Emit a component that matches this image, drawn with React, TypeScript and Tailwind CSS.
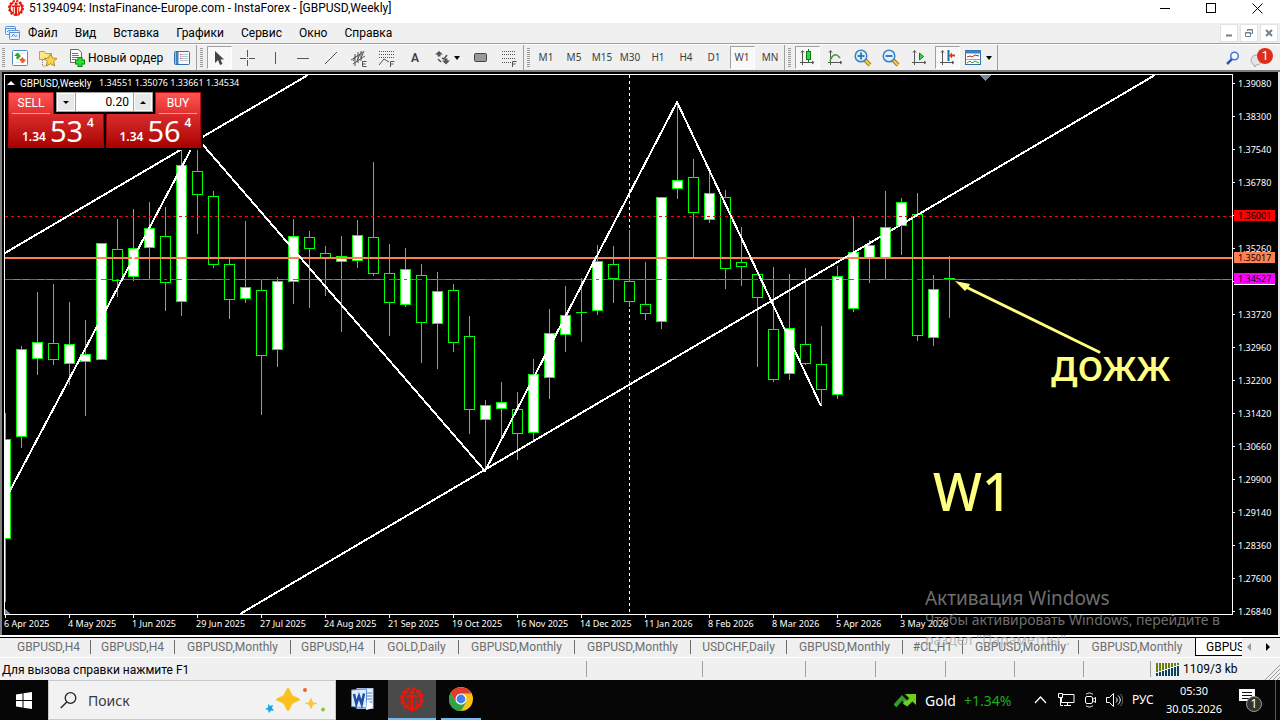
import React from 'react';
import { clsx } from 'clsx';

// [high, body top, body bottom, low, filled]
type Candle = [number, number, number, number, boolean];

const CANDLE_STEP = 16;

const candles: Candle[] = [
    [413, 439, 538, 601, true],
    [346, 349, 436, 447, true],
    [292, 342, 358, 374, true],
    [284, 343, 359, 364, false],
    [302, 344, 363, 384, true],
    [320, 354, 361, 415, true],
    [243, 243, 359, 359, true],
    [219, 249, 280, 296, false],
    [209, 248, 276, 280, true],
    [202, 228, 247, 279, true],
    [207, 236, 282, 310, false],
    [148, 165, 301, 315, true],
    [138, 171, 194, 233, false],
    [191, 196, 264, 267, false],
    [258, 264, 299, 318, false],
    [221, 287, 298, 302, true],
    [280, 290, 355, 414, false],
    [277, 281, 349, 366, true],
    [219, 236, 281, 303, true],
    [231, 237, 248, 307, false],
    [246, 253, 258, 295, false],
    [236, 256, 261, 331, true],
    [220, 235, 260, 267, true],
    [162, 237, 273, 275, false],
    [244, 273, 302, 335, false],
    [248, 269, 304, 306, true],
    [264, 275, 322, 362, false],
    [272, 291, 323, 368, true],
    [284, 290, 342, 351, false],
    [316, 336, 409, 433, false],
    [400, 405, 419, 469, true],
    [382, 402, 408, 438, true],
    [392, 409, 433, 459, false],
    [359, 374, 432, 440, true],
    [309, 333, 377, 398, true],
    [286, 315, 334, 351, true],
    [278, 312, 312, 341, false],
    [245, 261, 310, 314, true],
    [246, 264, 278, 302, false],
    [230, 281, 301, 306, false],
    [262, 304, 313, 319, false],
    [197, 197, 321, 328, true],
    [102, 180, 188, 198, true],
    [159, 177, 212, 257, false],
    [171, 193, 219, 222, true],
    [190, 197, 268, 288, false],
    [227, 262, 266, 285, false],
    [274, 274, 297, 366, false],
    [267, 329, 379, 381, false],
    [274, 328, 373, 379, true],
    [268, 344, 363, 364, false],
    [326, 364, 389, 404, false],
    [266, 276, 394, 398, true],
    [216, 252, 308, 311, true],
    [240, 245, 258, 282, true],
    [191, 227, 258, 279, true],
    [198, 202, 225, 254, true],
    [193, 214, 335, 340, false],
    [275, 289, 337, 345, true],
    [256, 278, 278, 317, false],
];

const prices = [
    '1.39080', '1.38300', '1.37540', '1.36780', '', '1.35260', '', '1.33720', '1.32960',
    '1.32200', '1.31420', '1.30660', '1.29900', '1.29140', '1.28360', '1.27600', '1.26840',
];

const dates = [
    '6 Apr 2025', '4 May 2025', '1 Jun 2025', '29 Jun 2025', '27 Jul 2025', '24 Aug 2025',
    '21 Sep 2025', '19 Oct 2025', '16 Nov 2025', '14 Dec 2025', '11 Jan 2026', '8 Feb 2026',
    '8 Mar 2026', '5 Apr 2026', '3 May 2026',
];

const chartTabs = [
    { label: 'GBPUSD,H4', width: 'w-[84px]' },
    { label: 'GBPUSD,H4', width: 'w-[84px]' },
    { label: 'GBPUSD,Monthly', width: 'w-[116px]' },
    { label: 'GBPUSD,H4', width: 'w-[84px]' },
    { label: 'GOLD,Daily', width: 'w-[84px]' },
    { label: 'GBPUSD,Monthly', width: 'w-[116px]' },
    { label: 'GBPUSD,Monthly', width: 'w-[116px]' },
    { label: 'USDCHF,Daily', width: 'w-[96px]' },
    { label: 'GBPUSD,Monthly', width: 'w-[116px]' },
    { label: '#CL,H1', width: 'w-[60px]' },
    { label: 'GBPUSD,Monthly', width: 'w-[116px]' },
    { label: 'GBPUSD,Monthly', width: 'w-[116px]' },
];

const menu = ['Файл', 'Вид', 'Вставка', 'Графики', 'Сервис', 'Окно', 'Справка'];
const timeframes = ['M1', 'M5', 'M15', 'M30', 'H1', 'H4', 'D1', 'W1', 'MN'];

const Logo = ({ className }: { className: string }) => (
    <svg viewBox="0 0 24 24" className={className} fill="none" stroke="#e8170c">
        <circle cx="12" cy="12" r="10.5" strokeWidth="3" strokeDasharray="3.3 2.2" />
        <path d="M8 20.200A9 9 0 0 1 8 3.900M16 3.900A9 9 0 0 1 16 20.200" strokeWidth="2.600" />
        <circle cx="12" cy="5.500" r="2.300" fill="#e8170c" stroke="none" />
        <path d="M5.500 9.500C9 9 15 9 18.500 9.500" strokeWidth="2.600" />
        <path d="M12 9v15" strokeWidth="3.400" />
        <path d="M8 11.500V22M16 11.500V22" strokeWidth="1.400" />
    </svg>
);

const TitleBar = () => (
    <header className="flex h-[23px] shrink-0 items-start bg-white text-black">
        <Logo className="ml-2 h-4 w-4" />
        <h1 className="ml-[5px] flex-1 text-[12px] leading-4 whitespace-nowrap">
            51394094: InstaFinance-Europe.com - InstaForex - [GBPUSD,Weekly]
        </h1>
        <div className="flex">
            <button aria-label="Свернуть" className="flex h-4 w-[46px] items-center justify-center">
                <svg width="11" height="11" shapeRendering="crispEdges"><path d="M0 5.500h10" stroke="#000" /></svg>
            </button>
            <button aria-label="Развернуть" className="flex h-4 w-[46px] items-center justify-center">
                <svg width="11" height="11" shapeRendering="crispEdges"><path d="M.5 .5h9v9h-9z" fill="none" stroke="#000" /></svg>
            </button>
            <button aria-label="Закрыть" className="flex h-4 w-[46px] items-center justify-center">
                <svg width="11" height="11"><path d="M.5 .5l10 10M10.500 .5l-10 10" stroke="#000" /></svg>
            </button>
        </div>
    </header>
);

const MenuBar = () => (
    <nav className="flex h-[21px] shrink-0 items-center border-b border-[#a0a0a0] bg-[#f0f0f0] text-[12px] text-black">
        <svg width="16" height="16" className="ml-[5px] mr-[7px]" fill="#e9f3ff" stroke="#5b93d8">
            <rect x=".5" y="1.500" width="10" height="8" rx="1" />
            <path d="M.5 3.500h10M2 7l2-2 2 2" />
            <rect x="4.500" y="5.500" width="10" height="9" rx="1" />
            <path d="M4.500 7.500h10M6.500 12l2-3 2 3 2-2" />
        </svg>
        <div className="flex flex-1 gap-[17px]">
            {menu.map(item => <button key={item} className="leading-4">{item}</button>)}
        </div>
        <div className="mr-[2px] flex gap-[2px]">
            <button aria-label="Свернуть окно" className="flex h-[18px] w-[18px] items-center justify-center border border-[#e2e2e2] bg-white">
                <svg width="10" height="10"><path d="M2 7.500h6" stroke="#6f8195" strokeWidth="2" /></svg>
            </button>
            <button aria-label="Восстановить окно" className="flex h-[18px] w-[18px] items-center justify-center border border-[#e2e2e2] bg-white">
                <svg width="10" height="10" fill="none" stroke="#6f8195"><path d="M3.500 3V1.500h5v4H7M1.500 4.500h5v4h-5zM3 2h6M1 5h6" /></svg>
            </button>
            <button aria-label="Закрыть окно" className="flex h-[18px] w-[18px] items-center justify-center border border-[#e2e2e2] bg-white">
                <svg width="10" height="10"><path d="M2 2l6 6M8 2l-6 6" stroke="#6f8195" strokeWidth="2" /></svg>
            </button>
        </div>
    </nav>
);

const Grip = ({ first }: { first?: boolean }) => (
    <div className={clsx('flex h-full shrink-0 items-center', first ? 'w-[6px] pl-[2px]' : 'w-[9px] border-l border-[#a0a0a0] pl-[3px]')}>
        <svg width="3" height="20" shapeRendering="crispEdges"><path d="M1.500 0v20" stroke="#9a9a9a" strokeWidth="3" strokeDasharray="1 1" /></svg>
    </div>
);

interface ToolProps {
    label: string;
    active?: boolean;
    width?: string;
    children: React.ReactNode;
}

const Tool = ({ label, active, width = 'w-7', children }: ToolProps) => (
    <button aria-label={label} title={label} className={clsx('flex h-full shrink-0 items-center justify-center', width)}>
        <span className={clsx('flex h-[23px] items-center justify-center', active && 'w-[25px] border border-white border-t-[#a0a0a0] border-l-[#a0a0a0] bg-[#f8f8f8]')}>
            {children}
        </span>
    </button>
);

const Caret = () => <svg width="7" height="4" className="ml-[4px]"><path d="M0 0h6L3 4z" fill="#000" /></svg>;

const Axes = () => <path d="M3.500 2v14M1 13.500h14M2 3.500l1.500-2 1.500 2M13 12l2 1.500-2 1.500" fill="none" stroke="#555" />;

const ZoomGlass = ({ plus }: { plus?: boolean }) => (
    <svg width="18" height="18">
        <path d="M10 10l6 6" stroke="#a87c10" strokeWidth="4" />
        <path d="M10 10l6 6" stroke="#f5cf4a" strokeWidth="2" />
        <circle cx="7" cy="7" r="5.800" fill="#dff0fc" stroke="#3c82c8" strokeWidth="1.500" />
        <path d={plus ? 'M3.500 7h7M7 3.500v7' : 'M3.500 7h7'} stroke="#3a7fae" strokeWidth="2" />
    </svg>
);

const Toolbar = () => (
    <div className="flex h-[28px] shrink-0 items-center border-t border-b-2 border-t-white border-b-[#7c7c7c] bg-[#f0f0f0] text-[#404040]">
        <Grip first />
        <Tool label="Новый график">
            <svg width="16" height="16">
                <rect x=".5" y=".5" width="15" height="15" rx="1" fill="#fff" stroke="#4d8fcb" />
                <path d="M3 3.500h10M3 12.500h10" stroke="#d5e6f5" />
                <path d="M5.500 2.500L9 6l-3.500 3.500L4 8l1-2-3 0z" fill="#32a51f" />
                <path d="M10.500 13.500L14 10l-2-1-1.500-2-2 2H7z" fill="#e8602a" />
            </svg>
        </Tool>
        <Tool label="Профили">
            <svg width="20" height="18">
                <path d="M1.500 2.500h5l1 2h6v6h-12z" fill="#fbe68a" stroke="#c9a227" />
                <path d="M4.500 11v6h4" fill="none" stroke="#777" strokeDasharray="1 1" />
                <path d="M12.500 5l2 4 4.500.5-3.300 3 1 4.500-4.200-2.300L8.300 17l1-4.500-3.300-3 4.500-.5z" fill="#fbd24c" stroke="#b98a1c" />
            </svg>
        </Tool>
        <button className="flex h-full w-[106px] shrink-0 items-center pl-[7px] text-[12px] text-black">
            <svg width="17" height="18" className="shrink-0">
                <path d="M1.500 .5h8l3 3v10h-11z" fill="#fff" stroke="#666" />
                <path d="M3 4.500h6M3 6.500h7M3 8.500h7M3 10.500h4" stroke="#777" />
                <path d="M11 8v10M6 13h10" stroke="#078a07" strokeWidth="5" />
                <path d="M11 9v8M7 13h8" stroke="#2fdc2f" strokeWidth="3" />
            </svg>
            <span className="ml-[2px] leading-4 whitespace-nowrap">Новый ордер</span>
        </button>
        <Tool label="Обзор рынка">
            <svg width="16" height="14">
                <rect x=".5" y=".5" width="15" height="13" rx="1" fill="#f4faff" stroke="#2d6fae" />
                <path d="M3 1v12" stroke="#3f82c2" strokeWidth="3" />
                <path d="M6 3.500h8M6 5.500h8M6 7.500h8M6 9.500h8" stroke="#b8c4cf" />
                <path d="M6 3.500h1M6 7.500h1" stroke="#c33" />
            </svg>
        </Tool>

        <Grip />
        <Tool label="Курсор" active>
            <svg width="12" height="16"><path d="M2 1v12l3-3 2 5 2.500-1L7.500 9.500H11z" fill="#444" /></svg>
        </Tool>
        <Tool label="Перекрестие">
            <svg width="16" height="16" shapeRendering="crispEdges"><path d="M8.500 0v7M8.500 10v6M1 8.500h6M10 8.500h6M8 8.500h1" stroke="#555" /></svg>
        </Tool>
        <Tool label="Вертикальная линия">
            <svg width="16" height="16" shapeRendering="crispEdges"><path d="M8.500 2v12" stroke="#555" /></svg>
        </Tool>
        <Tool label="Горизонтальная линия">
            <svg width="16" height="16" shapeRendering="crispEdges"><path d="M2 8.500h12" stroke="#555" /></svg>
        </Tool>
        <Tool label="Трендовая линия">
            <svg width="16" height="16"><path d="M2 14L14 2" stroke="#555" /></svg>
        </Tool>
        <Tool label="Равноудаленный канал">
            <svg width="18" height="18" fill="none" stroke="#555">
                <path d="M1 11L13 3M3 15L15 7M5 5v12M8 3v11M11 2v10M3 12l3-5M7 12l3-7M11 9l3-7" />
                <path d="M16.500 12.500h-4v5h4M12.500 15h3" />
            </svg>
        </Tool>
        <Tool label="Линии Фибоначчи">
            <svg width="18" height="18" fill="none" stroke="#555">
                <path d="M1 2.500h16M1 5.500h16M1 8.500h16" strokeDasharray="1 1" />
                <path d="M1 16l5-6 5 3M12.500 18v-5.500h4M12.500 15h3" />
            </svg>
        </Tool>
        <Tool label="Текст"><span className="text-[12px] font-semibold">A</span></Tool>
        <Tool label="Стрелки" width="w-[38px]">
            <svg width="15" height="14" fill="#555">
                <path d="M4 0l4 3.500h-2.500v2h-3v-2H0zM11 13.500l4-4h-2.500v-2h-3v2H7z" />
                <path d="M3 8l3 3M7 7l2 1 3-4" stroke="#555" strokeWidth="1.500" fill="none" />
            </svg>
            <Caret />
        </Tool>
        <Tool label="Прямоугольник">
            <svg width="14" height="10"><rect x=".5" y=".5" width="12" height="8" rx="1" fill="#999" stroke="#444" /></svg>
        </Tool>
        <Tool label="Сетка">
            <svg width="16" height="18" fill="none" stroke="#555">
                <path d="M1 2.500h14M1 5.500h14M1 9.500h14M1 13.500h9" strokeDasharray="1 1" />
                <path d="M11.500 18v-5.500h4M11.500 15h3" />
            </svg>
        </Tool>

        <Grip />
        {timeframes.map(tf => (
            <Tool key={tf} label={tf} active={tf === 'W1'}>
                <span className="font-['Noto_Sans',sans-serif] text-[10px]">{tf}</span>
            </Tool>
        ))}

        <Grip />
        <Tool label="Японские свечи" active>
            <svg width="16" height="17">
                <Axes />
                <path d="M9.500 0v13" stroke="#0a7a0a" />
                <rect x="7.500" y="2.500" width="4" height="8" fill="#2fd84a" stroke="#0a7a0a" />
            </svg>
        </Tool>
        <Tool label="Линия">
            <svg width="16" height="17"><Axes /><path d="M3 12c2-6 6-9 10-3" fill="none" stroke="#3d9a3d" strokeWidth="1.500" /></svg>
        </Tool>
        <Tool label="Увеличить"><ZoomGlass plus /></Tool>
        <Tool label="Уменьшить"><ZoomGlass /></Tool>
        <Tool label="Автопрокрутка">
            <svg width="16" height="17"><Axes /><path d="M8.500 4l4 3.500-4 3.500z" fill="#2fd84a" stroke="#0a8a0a" /></svg>
        </Tool>
        <Tool label="Сдвиг графика" active>
            <svg width="16" height="17"><Axes /><path d="M9.500 1v11" stroke="#1f6fa8" strokeWidth="2" /><path d="M10 6.500l3-3v2h3v2h-3v2z" fill="#c8401c" /></svg>
        </Tool>
        <Tool label="Шаблоны" width="w-[36px]">
            <svg width="17" height="16">
                <rect x=".5" y=".5" width="15" height="14" fill="#fff" stroke="#2f70ad" />
                <path d="M0 2h16" stroke="#3f82c2" strokeWidth="3" />
                <path d="M2 7l3-1 2 1 3-2 4 1" stroke="#993322" fill="none" />
                <path d="M1 9.500h14" stroke="#8ab" />
                <path d="M2 13l3-2 2 2 3-2 4 2" stroke="#2a9a2a" fill="none" />
            </svg>
            <Caret />
        </Tool>
        <div className="h-full border-l border-[#a0a0a0]" />

        <div className="mr-[7px] ml-auto flex h-full items-center gap-[10px]">
            <button aria-label="Поиск">
                <svg width="14" height="14"><circle cx="8.500" cy="5" r="3.800" fill="#f4f8ff" stroke="#4176dd" strokeWidth="1.500" /><path d="M6 8l-5 5" stroke="#2f5cc0" strokeWidth="2.500" /></svg>
            </button>
            <button aria-label="Уведомления" className="relative h-5 w-[23px]">
                <svg width="14" height="14" className="absolute bottom-0 left-0"><path d="M6 1c3 0 6 2 6 5s-3 5-6 5l-1 2-1-2C2 10 1 8 1 6s2-5 5-5z" fill="#e4e4e4" stroke="#aaa" /></svg>
                <span className="absolute top-0 right-0 h-4 w-4 rounded-full bg-[#dc2f1b] text-center text-[12px] leading-4 text-white">1</span>
            </button>
        </div>
    </div>
);

interface QuoteProps {
    base: string;
    big: string;
    small: string;
}

const Quote = ({ base, big, small }: QuoteProps) => (
    <button className="flex h-[34px] w-24 border border-t-0 border-[#a80000] bg-linear-to-b from-[#dc2b2b] to-[#a80000] pl-[13px] font-['Noto_Sans',sans-serif] text-white">
        <span className="mt-[15px] text-[12px] leading-4 font-semibold">{base}</span>
        <span className="ml-[4px] text-[29px] leading-[34px]">{big}</span>
        <span className="mt-px ml-[4px] text-[12px] leading-4 font-semibold">{small}</span>
    </button>
);

const TradePanel = () => (
    <div className="absolute top-[16px] left-0 w-[198px] bg-black pt-px pb-[2px] pl-[3px]">
        <div className="flex h-[22px] justify-between pr-[2px]">
            <button className="w-[46px] border border-b-0 border-[#b01010] bg-linear-to-b from-[#ff5252] to-[#e03030] px-[3px] text-[12px] text-white">
                <span className="block border-b border-[#ff9a9a] leading-5">SELL</span>
            </button>
            <div className="flex h-5 w-[97px] border border-[#a0a0a0] bg-[#e8e8e8]">
                <button aria-label="Меньше" className="flex w-[18px] items-center justify-center border border-white"><svg width="6" height="3"><path d="M0 0h6L3 3z" /></svg></button>
                <input aria-label="Объем" defaultValue="0.20" className="h-full w-[59px] min-w-0 border-x border-[#a0a0a0] bg-white pr-[4px] text-right text-[12px] text-black" />
                <button aria-label="Больше" className="flex w-[18px] items-center justify-center border border-white"><svg width="6" height="3"><path d="M0 3h6L3 0z" /></svg></button>
            </div>
            <button className="w-[46px] border border-b-0 border-[#b01010] bg-linear-to-b from-[#ff5252] to-[#e03030] px-[3px] text-[12px] text-white">
                <span className="block border-b border-[#ff9a9a] leading-5">BUY</span>
            </button>
        </div>
        <div className="flex gap-[2px] pr-[2px]">
            <Quote base="1.34" big="53" small="4" />
            <Quote base="1.34" big="56" small="4" />
        </div>
    </div>
);

const Plot = () => (
    <div className="relative min-w-0 flex-1 overflow-hidden border border-white">
        <svg className="block h-full w-full" role="img" aria-label="GBPUSD,Weekly">
            <g transform="translate(-5 -75)" shapeRendering="crispEdges">
                <path d="M629.500 75v540" stroke="#fff" strokeDasharray="3 3" />
                <path d="M5 279.500h1300" stroke="#778899" />
                {candles.map(([high, top, bottom, low, filled], i) => {
                    const x = 5 + i * CANDLE_STEP;
                    return (
                        <g key={i}>
                            <path d={`M${x + 0.5} ${high}V${low + 1}`} stroke="#00ff00" />
                            {bottom > top
                                ? <rect x={x - 4.5} y={top + 0.5} width="10" height={bottom - top} fill={filled ? '#fff' : '#000'} stroke="#00ff00" />
                                : <path d={`M${x - 5} ${top + 0.5}h11`} stroke="#00ff00" />}
                        </g>
                    );
                })}
                <path d="M5 216.500h1300" stroke="#ff0000" strokeDasharray="3 3" />
                <path d="M5 279.500h1300" stroke="#ff00ff" strokeDasharray="9 6 3 6" />
                <path d="M5 258h1300" stroke="#ff7f50" strokeWidth="2" />
                <path d="M5 253L308 75M240 614L1155 75M5 500L197 138L485 471L677 102L821 406" fill="none" stroke="#fff" strokeWidth="2" />
                <path d="M979 75h12l-6 6zM5 608v7h6z" fill="#778899" />
            </g>
            <g transform="translate(-5 -75)" fill="#ffff80" className="font-['Noto_Sans',sans-serif]">
                <path d="M1099 352L966 287" stroke="#ffff80" strokeWidth="3" strokeLinecap="round" />
                <path d="M955 281l15 3-2 4-3 3z" />
                <text x="1051" y="381" fontSize="43" fontWeight="500">дожж</text>
                <text x="933" y="511" fontSize="52" fontWeight="500">W1</text>
            </g>
        </svg>
        <div className="absolute top-0 left-[2px] flex h-4 items-center text-[9px] whitespace-nowrap text-white">
            <svg width="8" height="4" className="mr-[5px]"><path d="M0 4h8L4 0z" fill="#fff" /></svg>
            <span className="w-[79px] text-[10px]">GBPUSD,Weekly</span>
            <span className="font-['Noto_Sans',sans-serif]">1.34551 1.35076 1.33661 1.34534</span>
        </div>
        <TradePanel />
    </div>
);

const PriceAxis = () => (
    <div className="relative w-[45px] shrink-0 font-['Noto_Sans',sans-serif] text-[9px] text-white">
        <div className="-mt-[7px] flex flex-col">
            {prices.map((price, i) => (
                <div key={i} className="flex h-[33px] shrink-0 items-center">
                    <span className="mr-[3px] h-px w-[2px] bg-white" />
                    {price}
                </div>
            ))}
        </div>
        <span className="absolute top-[136px] left-px h-[11px] w-[41px] bg-[#ff0000] pl-[4px] leading-[11px] text-black">1.36001</span>
        <span className="absolute top-[178px] left-px h-[11px] w-[41px] bg-[#ff7f50] pl-[4px] leading-[11px] text-black">1.35017</span>
        <span className="absolute top-[199px] left-px h-3 w-[41px] border-b border-white bg-[#ff00ff] pl-[4px] leading-[11px] text-black">1.34527</span>
    </div>
);

const Chart = () => (
    <main className="flex min-h-0 flex-1 flex-col border-r-2 border-l-2 border-r-[#e3e3e3] border-l-[#808080] bg-black pt-[2px] pl-[2px]">
        <div className="flex min-h-0 flex-1">
            <Plot />
            <PriceAxis />
        </div>
        <div className="flex h-5 shrink-0 overflow-hidden font-['Noto_Sans',sans-serif] text-[9px] text-white">
            {dates.map(date => (
                <div key={date} className="w-16 shrink-0">
                    <div className="ml-px h-[3px] w-px bg-white" />
                    <div className="leading-3 whitespace-nowrap">{date}</div>
                </div>
            ))}
        </div>
    </main>
);

const ChartTabs = () => (
    <div className="flex h-[23px] shrink-0 border-t-2 border-b border-t-white border-b-white bg-[#f0f0f0] text-[12px] text-[#6d6d6d]">
        <div role="tablist" className="flex min-w-0 flex-1 overflow-hidden border-t border-black pl-[7px]">
            {chartTabs.map((tab, i) => (
                <button key={i} role="tab" aria-selected={false} className={clsx('flex shrink-0 items-center justify-center pb-px', tab.width)}>
                    <span className="flex-1 leading-4">{tab.label}</span>
                    {i < chartTabs.length - 1 && <span className="h-[14px] w-px bg-[#6d6d6d]" />}
                </button>
            ))}
            <button role="tab" aria-selected className="mb-px shrink-0 border-b border-l border-black bg-white pl-[10px] leading-4 text-black">GBPUSD,Weekly</button>
        </div>
        <div className="flex w-[38px] shrink-0 items-center justify-between border-t border-black pr-[9px] pb-[2px] pl-[5px]">
            <button aria-label="Назад"><svg width="5" height="8"><path d="M4 0v8L0 4z" fill="#9a9a9a" /></svg></button>
            <button aria-label="Вперед"><svg width="5" height="8"><path d="M0 0v8l4-4z" fill="#000" /></svg></button>
        </div>
    </div>
);

const StatusBar = () => (
    <footer className="flex h-[22px] shrink-0 bg-[#f0f0f0] text-[12px] text-black">
        <span className="min-w-0 flex-1 pl-[2px] leading-6">Для вызова справки нажмите F1</span>
        <span className="my-[3px] w-[116px] border-l border-[#a0a0a0]" />
        <span className="my-[3px] w-[103px] border-l border-[#a0a0a0]" />
        <span className="my-[3px] w-[70px] border-l border-[#a0a0a0]" />
        <span className="my-[3px] w-[70px] border-l border-[#a0a0a0]" />
        <span className="my-[3px] w-[69px] border-l border-[#a0a0a0]" />
        <span className="my-[3px] w-[69px] border-l border-[#a0a0a0]" />
        <span className="my-[3px] w-[67px] border-l border-[#a0a0a0]" />
        <span className="my-[3px] flex w-[114px] items-center border-l border-[#a0a0a0] pl-[5px]">
            <svg width="24" height="13" shapeRendering="crispEdges">
                {[0, 1, 2, 3, 4, 5, 6, 7].map(n => (
                    <g key={n}>
                        <path d={`M${n * 3 + 1} 0V${9 - n}`} stroke="#6b7f10" strokeWidth="2" />
                        <path d={`M${n * 3 + 1} ${10 - n}V13`} stroke="#0a4060" strokeWidth="2" />
                    </g>
                ))}
            </svg>
            <span className="ml-[3px] leading-4 whitespace-nowrap">1109/3 kb</span>
        </span>
        <svg width="16" height="16" className="mt-auto shrink-0" stroke="#9a9a9a"><path d="M1 16L16 1M5 16L16 5M9 16l7-7M13 16l3-3" /></svg>
    </footer>
);

const Taskbar = () => (
    <div className="flex h-10 shrink-0 items-stretch bg-[#060606] font-['Noto_Sans',sans-serif] text-white">
        <button aria-label="Пуск" className="flex w-12 items-center justify-center">
            <svg width="16" height="17" fill="#fff"><path d="M0 2.500l6.500-1V8H0zM7.500 1.300L16 0v8H7.500zM0 9h6.500v6.500l-6.500-1zM7.500 9H16v8l-8.500-1.300z" /></svg>
        </button>
        <label className="flex w-[288px] items-center border border-[#c8c8c8] bg-[#f2f2f2] pr-[9px] pl-[11px]">
            <svg width="17" height="17" fill="none" stroke="#222" strokeWidth="1.300"><circle cx="10.500" cy="6" r="5.300" /><path d="M6.800 10L.8 16" /></svg>
            <input placeholder="Поиск" aria-label="Поиск" className="ml-[11px] min-w-0 flex-1 bg-transparent text-[14px] text-black placeholder:text-[#3a3a3a]" />
            <svg width="62" height="26" viewBox="0 0 62 26">
                <path d="M24 1c2 0 3 6 5 7.500s7 2.500 7 4-5 2.500-7 4S26 24 24 24s-3-6-5-7.500-7-2.500-7-4 5-2.500 7-4S22 1 24 1z" fill="#fbc21f" />
                <path d="M47 11c1 0 1 3 2 4s4 .5 4 1.500-3 .5-4 1.500-1 4-2 4-1-3-2-4-4-.5-4-1.500 3-.5 4-1.500 1-4 2-4z" fill="#fbc53a" />
                <path d="M4 17l2 2 3-1-1 3 2 3-3-.5L5 26l-1-3-3-1 3-1.500z" fill="#12a5ea" />
                <circle cx="41" cy="3" r="2" fill="#f2622c" />
                <circle cx="59" cy="22.500" r="2" fill="#8dc63f" />
            </svg>
        </label>
        <button aria-label="Word" className="ml-[2px] flex w-12 items-center justify-center pb-[2px]">
            <svg width="23" height="23">
                <rect x="6" y=".5" width="16" height="20" fill="#eaf2fc" stroke="#a9c5ea" />
                <path d="M14 5h7M14 8h7M14 11h7M14 14h7" stroke="#4f86cc" />
                <path d="M.5 2l15-1v19l-15-1.500z" fill="#dfeafa" stroke="#5f90d4" />
                <path d="M3 6l2.300 10L8 8l2.700 8L13 5.500" fill="none" stroke="#1c4fa3" strokeWidth="2.500" />
                <path d="M16 12l6 5-3 4-4 1z" fill="#fff" />
            </svg>
        </button>
        <button aria-label="InstaForex" className="ml-[2px] flex w-12 items-center justify-center border-b-2 border-[#76b9ed] bg-[#4a4a4a]">
            <Logo className="h-6 w-6" />
        </button>
        <button aria-label="Chrome" className="ml-[5px] flex w-10 items-center justify-center border-b-2 border-[#76b9ed]">
            <svg width="24" height="24" viewBox="0 0 24 24">
                <circle cx="12" cy="12" r="12" fill="#fbc116" />
                <path d="M12 6.500h10.400A12 12 0 0 0 1.600 6l5.200 9z" fill="#e33b2e" />
                <path d="M1.600 6A12 12 0 0 0 12 24l5.200-9-5.200 2.800L6.800 15z" fill="#2fa24c" />
                <circle cx="12" cy="12" r="5.500" fill="#fff" />
                <circle cx="12" cy="12" r="4.400" fill="#3f7fee" />
            </svg>
        </button>
        <div className="ml-auto flex items-center">
            <button className="flex items-center text-[14px]">
                <svg width="23" height="15">
                    <path d="M1 13l7-8 5 5 6-6" fill="none" stroke="#2f9e2b" strokeWidth="4" />
                    <path d="M10 9l3 2 6-6" fill="none" stroke="#6fcf1b" strokeWidth="4" />
                    <path d="M11 1h11v11z" fill="#6fcf1b" />
                </svg>
                <span className="ml-2 w-[39px] text-left">Gold</span>
                <span className="w-[70px] text-left text-[#16b116]">+1.34%</span>
            </button>
            <button aria-label="Скрытые значки" className="w-6"><svg width="13" height="8" fill="none" stroke="#fff" strokeWidth="1.300"><path d="M1 7l5.500-6L12 7" /></svg></button>
            <button aria-label="Сеть" className="w-6 pb-px">
                <svg width="17" height="15" fill="none" stroke="#fff"><path d="M5 2.500h11v8H3.500V6M9.500 10.500v3M6 13.500h7M.5 1.500h4v4h-4zM2.500 5.500v8H5" /></svg>
            </button>
            <button aria-label="Камера" className="flex w-6 pl-[2px]">
                <svg width="14" height="16" fill="none" stroke="#fff"><rect x="1.500" y="4.500" width="7" height="7" rx="1.500" /><path d="M8.500 7.500l3-2v5l-3-2M2 2.500c2-2 5-2 7 0M2 13.500c2 2 5 2 7 0" /></svg>
            </button>
            <button aria-label="Громкость" className="w-[26px]">
                <svg width="17" height="14" fill="none" stroke="#fff"><path d="M.5 4.500h3l4-4v13l-4-4h-3zM10 4.500c1.500 1.500 1.500 3.500 0 5M12 2.500c3 3 3 6 0 9" /><path d="M14.500 1c3 4 3 8 0 12" stroke="#777" /></svg>
            </button>
            <button className="w-[28px] text-left text-[12px]">РУС</button>
            <div className="w-[68px] text-center text-[11px] leading-[18px]">
                <div>05:30</div>
                <div>30.05.2026</div>
            </div>
            <button aria-label="Центр уведомлений" className="relative ml-[10px] h-6 w-[37px]">
                <svg width="18" height="18" className="absolute top-0 left-0"><path d="M1 1h16v12h-4v4l-4-4H1z" fill="#fff" /><path d="M4 4.500h10M4 7.500h10M4 10.500h7" stroke="#111" /></svg>
                <span className="absolute top-2 left-2 h-4 w-4 rounded-full border border-[#999] bg-[#333] text-center text-[12px] leading-[14px]">1</span>
            </button>
            <div className="h-full w-[5px] border-l border-[#555]" />
        </div>
    </div>
);

const ActivationNotice = () => (
    <div className="pointer-events-none absolute right-[45px] bottom-[70px] w-[310px] font-['Noto_Sans',sans-serif] text-[#a0a0a0]/70">
        <p className="text-[19px] leading-6">Активация Windows</p>
        <p className="text-[14px] leading-5 whitespace-nowrap">
            Чтобы активировать Windows, перейдите в<br />
            раздел "Параметры".
        </p>
    </div>
);

const App = () => (
    <div className="relative flex h-screen flex-col overflow-hidden bg-black font-[Roboto,sans-serif]">
        <TitleBar />
        <MenuBar />
        <Toolbar />
        <Chart />
        <ChartTabs />
        <StatusBar />
        <Taskbar />
        <ActivationNotice />
    </div>
);

export default App;
